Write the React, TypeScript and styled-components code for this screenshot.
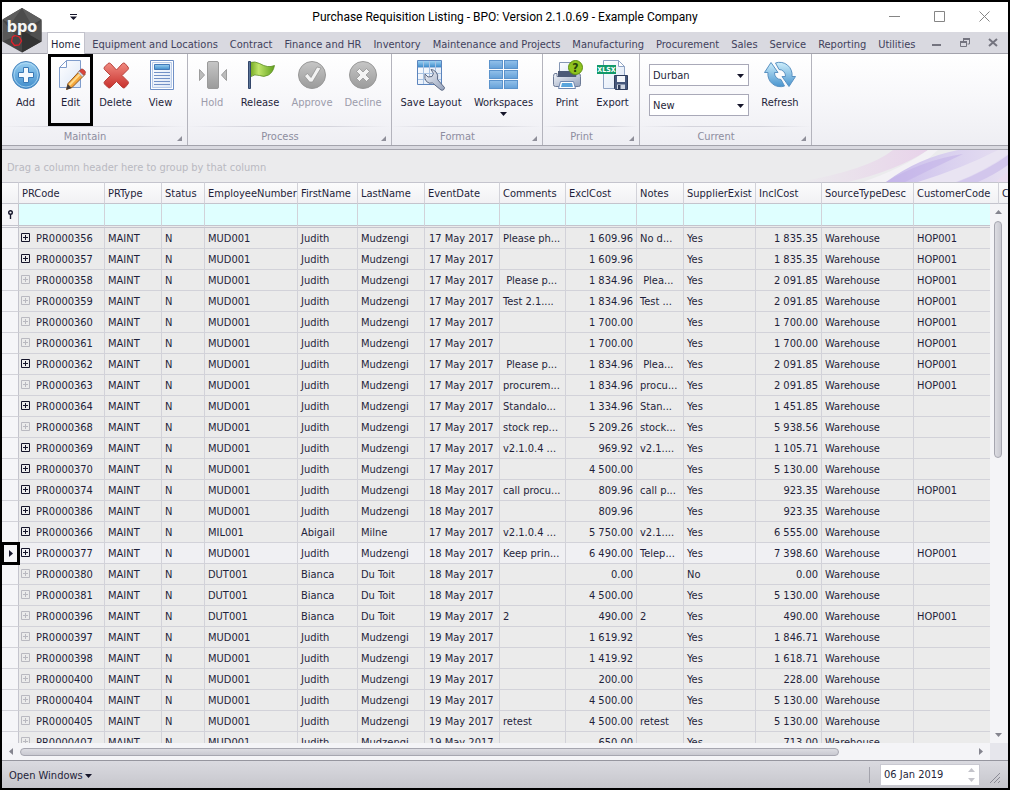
import React from "react";
import styled, { createGlobalStyle, css } from "styled-components";

const ink = "#1f1f3a";
const line = "#d2d2d9";
const edge = "#a3a3ac";

const GlobalStyle = createGlobalStyle`
  *, *::before, *::after { box-sizing: border-box; }
  body { margin: 0; background: #000; }
  body, button, input, select {
    font-family: "DejaVu Sans Condensed", "DejaVu Sans", Tahoma, sans-serif;
    font-stretch: condensed;
    font-size: 11px;
    line-height: 14px;
    color: ${ink};
  }
  button, input, select { margin: 0; padding: 0; border: 0; background: none; border-radius: 0; outline: none; }
  svg { display: block; flex: none; }
`;

const Window = styled.div`
  position: relative;
  display: flex;
  flex-direction: column;
  height: 100vh;
  min-height: 400px;
  border: 2px solid #000;
  background: #d9d9e0;
  overflow: hidden;
`;

/* ---------- title bar ---------- */

const TitleBar = styled.header`
  display: grid;
  grid-template-columns: 1fr auto 1fr;
  align-items: center;
  height: 30px;
  flex: none;
  background: #fff;
`;

const Title = styled.h1`
  margin: 0;
  font: 400 12px/16px Roboto, "Open Sans", sans-serif;
  color: #000;
  white-space: nowrap;
`;

const QuickAccess = styled.button`
  width: 16px;
  height: 16px;
  margin-left: 63px;
  display: grid;
  place-items: center;
`;

const WindowButtons = styled.div`
  display: flex;
  justify-content: flex-end;
  gap: 29px;
  padding: 0 16px 2px 0;
`;

const WindowButton = styled.button`
  width: 16px;
  height: 16px;
  display: grid;
  place-items: center;
`;

const Logo = styled.div`
  position: absolute;
  left: 0;
  top: 6px;
`;

/* ---------- tabs ---------- */

const TabBar = styled.nav`
  display: flex;
  height: 22px;
  flex: none;
  padding-left: 45px;
  border-bottom: 1px solid ${edge};
`;

const Tab = styled.button<{ $active?: boolean }>`
  height: 21px;
  padding: 4px 6px 0;
  color: #41415c;
  white-space: nowrap;
  ${(p) =>
    p.$active &&
    css`
      height: 22px;
      margin-right: 1px;
      padding: 3px 4px 0 3px;
      color: ${ink};
      background: #fff;
      border: 1px solid #c2c2cb;
      border-bottom: 0;
    `}
`;

const MdiButtons = styled.div`
  display: flex;
  align-items: center;
  gap: 16px;
  margin-left: auto;
  padding-right: 9px;
`;

const MdiButton = styled.button`
  width: 12px;
  height: 12px;
`;

/* ---------- ribbon ---------- */

const Ribbon = styled.section`
  display: flex;
  height: 92px;
  flex: none;
  background: linear-gradient(#ffffff, #f7f7fa 50%, #eeeef3);
  border-bottom: 1px solid ${edge};
`;

const Group = styled.div`
  display: flex;
  flex-direction: column;
  border-right: 1px solid #b4b4bd;
`;

const GroupBody = styled.div`
  display: flex;
  height: 72px;
  padding: 0 4px 0 1px;
`;

const Caption = styled.div`
  position: relative;
  height: 19px;
  margin-right: 1px;
  padding: 3px 18px 0 0;
  text-align: center;
  color: #8d8d9f;
  border-top: 1px solid transparent;
  border-image: linear-gradient(90deg, transparent, #d4d4dc 30%, #d4d4dc 70%, transparent) 1;
`;

const Launcher = styled.svg`
  position: absolute;
  right: 4px;
  bottom: 4px;
`;

const Tool = styled.button<{ $width: number; $framed?: boolean }>`
  display: flex;
  flex-direction: column;
  align-items: center;
  width: ${(p) => p.$width}px;
  padding-top: 5px;
  white-space: nowrap;
  outline: ${(p) => (p.$framed ? "3px solid #000" : "none")};
  outline-offset: -3px;

  svg + span { margin-top: 5px; }
  &:disabled { color: #9c9cab; }
`;

const Pickers = styled.div`
  display: flex;
  flex-direction: column;
  gap: 8px;
  padding: 10px 4px 0 8px;
`;

const Picker = styled.label`
  display: grid;
  align-items: center;
  width: 100px;

  select, svg { grid-area: 1 / 1; }
  svg { justify-self: end; margin-right: 5px; pointer-events: none; }
`;

const Select = styled.select`
  appearance: none;
  width: 100%;
  height: 22px;
  padding: 1px 20px 0 3px;
  background: #fff;
  border: 1px solid #a9a9b8;
`;

/* ---------- grid ---------- */

const GroupPanel = styled.div`
  display: flex;
  justify-content: space-between;
  height: 33px;
  flex: none;
  margin-top: 3px;
  padding-left: 5px;
  overflow: hidden;
  border-top: 1px solid ${edge};
  background: #ebebed;
  color: #b9b9c1;
`;

const Hint = styled.span`
  padding-top: 11px;
`;

const GridArea = styled.main`
  position: relative;
  flex: 1;
  min-height: 0;
  overflow: hidden;
  background: #ebebeb;
`;

const Table = styled.table`
  width: 1100px;
  min-width: 100%;
  table-layout: fixed;
  border-collapse: separate;
  border-spacing: 0;
`;

const Head = styled.th`
  height: 22px;
  padding: 1px 3px 0;
  text-align: left;
  font-weight: 400;
  white-space: nowrap;
  background: linear-gradient(#fbfbfc, #f1f1f4);
  border: solid ${line};
  border-width: 1px 1px 1px 0;
  border-color: #c4c4cd ${line};
`;

const FilterCell = styled.td`
  height: 24px;
  padding: 0;
  background: #dfffff;
  background-clip: padding-box;
  border-right: 1px solid ${line};
  border-bottom: 3px double #c4c4cd;

  input { display: block; width: 100%; height: 20px; padding: 0 3px; }
`;

const Marker = styled.td<{ $framed?: boolean }>`
  height: 21px;
  padding: 0;
  background: #f5f5f8;
  border-right: 1px solid #c4c4cd;
  border-bottom: 1px solid ${line};
  outline: ${(p) => (p.$framed ? "3px solid #000" : "none")};
  outline-offset: -2px;

  svg { margin: 0 auto; }
`;

const FilterMarker = styled(Marker)`
  height: 24px;
  border-bottom: 3px double #c4c4cd;
`;

const Row = styled.tr<{ $focused?: boolean }>`
  background: ${(p) => (p.$focused ? "#f0f0f3" : "#ebebeb")};
`;

const Cell = styled.td<{ $align?: "right"; $date?: boolean }>`
  height: 21px;
  padding: 2px 3px 0 ${(p) => (p.$date ? 4 : 3)}px;
  text-align: ${(p) => p.$align ?? "left"};
  white-space: nowrap;
  overflow: hidden;
  border-right: 1px solid ${line};
  border-bottom: 1px solid ${line};
`;

const CodeCell = styled.div`
  display: flex;
  align-items: center;
  gap: 6px;
  margin-left: -1px;
`;

const Expander = styled.button<{ $dim: boolean }>`
  width: 9px;
  height: 9px;
  margin-bottom: 3px;
  color: ${(p) => (p.$dim ? "#b9b9c0" : "#15152a")};
`;

/* ---------- scroll bars ---------- */

const VScroll = styled.div`
  position: absolute;
  top: 22px;
  right: 0;
  bottom: 0;
  width: 18px;
  display: flex;
  flex-direction: column;
  align-items: center;
  background: #f4f4f7;
  padding: 5px 2px 5px 0;
  gap: 5px;
`;

const HScroll = styled.div`
  display: flex;
  align-items: center;
  gap: 5px;
  height: 17px;
  flex: none;
  padding: 0 24px 0 6px;
  background: linear-gradient(90deg, #f4f4f7, #f4f4f7) 0 0 / calc(100% - 18px) 100% no-repeat #e6e6ec;
`;

const Track = styled.div`
  flex: 1;
  min-height: 0;
`;

const Thumb = styled.div<{ $vertical?: boolean }>`
  border: 1px solid #a6a6b0;
  border-radius: 4px;
  ${(p) =>
    p.$vertical
      ? css`
          width: 8px;
          height: 47%;
          background: linear-gradient(90deg, #dcdce2, #c9c9d1);
        `
      : css`
          width: 86%;
          height: 8px;
          background: linear-gradient(#dcdce2, #c9c9d1);
        `}
`;

/* ---------- status bar ---------- */

const StatusBar = styled.footer`
  display: flex;
  align-items: center;
  height: 28px;
  flex: none;
  padding: 0 3px 0 7px;
  border-top: 1px solid #96969f;
  background: linear-gradient(#dadae0, #c6c6cc);
`;

const OpenWindows = styled.button`
  display: flex;
  align-items: center;
  gap: 2px;
  margin-right: auto;
  padding-top: 2px;
`;

const Divider = styled.div`
  width: 1px;
  height: 16px;
  margin-right: 10px;
  background: #a3a3ac;
`;

const DateBox = styled.label`
  display: flex;
  align-items: center;
  width: 100px;
  height: 22px;
  margin-right: 5px;
  padding: 0 4px 0 3px;
  background: #fff;
  border: 1px solid #c9c9d1;

  input { flex: 1; width: 0; padding-top: 1px; }
`;

/* ---------- small drawings ---------- */

type ArrowDir = "down" | "up" | "left" | "right";
const arrowShape: Record<ArrowDir, string> = {
  down: "M0 2h7L3.500 6z",
  up: "M0 5h7L3.500 1z",
  left: "M5 0v7L1 3.500z",
  right: "M2 0v7l4-3.500z",
};
const Arrow = ({ dir = "down", color = "#15152a" }: { dir?: ArrowDir; color?: string }) => (
  <svg width="7" height="7" viewBox="0 0 7 7" fill={color}>
    <path d={arrowShape[dir]} />
  </svg>
);

const Gradients = () => (
  <svg width="0" height="0" style={{ position: "absolute" }} aria-hidden="true">
    <defs>
      <linearGradient id="blue" x1="0" y1="0" x2="0" y2="1">
        <stop offset="0" stopColor="#9ad0f2" />
        <stop offset="1" stopColor="#3f8ccb" />
      </linearGradient>
      <linearGradient id="tile" x1="0" y1="0" x2="0" y2="1">
        <stop offset="0" stopColor="#93c1ea" />
        <stop offset="1" stopColor="#64a0d8" />
      </linearGradient>
      <linearGradient id="pale" x1="0" y1="0" x2="0" y2="1">
        <stop offset="0" stopColor="#cdeefb" />
        <stop offset="1" stopColor="#4a95cf" />
      </linearGradient>
      <linearGradient id="paper" x1="0" y1="0" x2="1" y2="1">
        <stop offset="0" stopColor="#ffffff" />
        <stop offset="1" stopColor="#dbe6f6" />
      </linearGradient>
      <linearGradient id="red" x1="0" y1="0" x2="0" y2="1">
        <stop offset="0" stopColor="#f08a80" />
        <stop offset="1" stopColor="#c8302c" />
      </linearGradient>
      <linearGradient id="grey" x1="0" y1="0" x2="0" y2="1">
        <stop offset="0" stopColor="#c6c6c6" />
        <stop offset="1" stopColor="#9b9b9b" />
      </linearGradient>
      <linearGradient id="green" x1="0" y1="0" x2="1" y2="0">
        <stop offset="0" stopColor="#6fa51e" />
        <stop offset="0.350" stopColor="#c0e56a" />
        <stop offset="1" stopColor="#5f9f1c" />
      </linearGradient>
      <linearGradient id="steel" x1="0" y1="0" x2="1" y2="1">
        <stop offset="0" stopColor="#f2f5fa" />
        <stop offset="1" stopColor="#93a0ba" />
      </linearGradient>
    </defs>
  </svg>
);

const icons = {
  add: (
    <>
      <circle cx="16" cy="16" r="13.500" fill="url(#blue)" stroke="#4a86bd" />
      <circle cx="16" cy="16" r="12" fill="none" stroke="#b9def5" strokeOpacity=".7" />
      <path d="M13.500 8.500h5v5h5v5h-5v5h-5v-5h-5v-5h5z" fill="#f4fafe" stroke="#3a79b5" />
    </>
  ),
  edit: (
    <>
      <path d="M11.500 1.500h14v27h-21v-20z" fill="url(#paper)" stroke="#7f9ccb" />
      <path d="M11.500 1.500v7h-7z" fill="#fff" stroke="#7f9ccb" />
      <path d="M11.500 30.500l1.500-6L25.500 11l4.500 4.500-13 13z" fill="#f5a63a" stroke="#8f5a26" />
      <path d="M14.500 26L27 13" stroke="#ffdb8c" strokeWidth="2" />
      <path d="M24 12.500l2-2.200c1.500-1.300 5.500 2.200 4.300 4l-2.300 2.500z" fill="#d8463c" stroke="#9d3a34" strokeWidth=".7" />
      <path d="M23 13.500l1.300-1.300 4.400 4.400-1.300 1.300z" fill="#d9dee8" stroke="#7b8191" strokeWidth=".5" />
      <path d="M11.300 30.700l1.500-5.500 3.700 3.700z" fill="#3d3a3c" />
    </>
  ),
  delete: (
    <path
      d="M4.500 8l3.500-3.500q1.200-1 2.500 0L16.500 11l6-6.500q1.200-1 2.500 0L28 8q1 1.200 0 2.500L22 16.500l6 6q1 1.200 0 2.500l-3 3.500q-1.200 1-2.500 0l-6-6-6 6q-1.200 1-2.500 0L4.500 25q-1-1.200 0-2.500l6-6-6-6q-1-1.200 0-2.500z"
      fill="url(#red)"
      stroke="#b8423c"
    />
  ),
  view: (
    <>
      <path d="M5.500 1.500h23v29h-23z" fill="#fff" stroke="#6f90c6" />
      <path d="M7.500 3.500h19v25h-19z" fill="url(#paper)" stroke="#b9cbe8" />
      <path d="M9.500 5.500h15v5h-15z" fill="url(#blue)" stroke="#4379b8" />
      <path d="M9 13.500h16M9 16.500h16M9 19.500h16M9 22.500h16M9 25.500h16" stroke="#7391c6" />
    </>
  ),
  hold: (
    <>
      <rect x="11.500" y="2.500" width="11" height="27" rx="1.500" fill="url(#grey)" stroke="#9a9a9a" />
      <path d="M3.500 10.500v11l5-5.500zM30.500 10.500v11l-5-5.500z" fill="#bcbcbc" stroke="#9c9c9c" />
    </>
  ),
  release: (
    <>
      <path d="M6 3.500q5-1.500 9.500 1t8 3 7-1q-1.500 7-6 9.500t-9 .500-9.500 1.500z" fill="url(#green)" stroke="#5b8b1f" strokeWidth=".8" />
      <path d="M4.500 2.500h2v27h-2z" fill="#5b7599" stroke="#33466a" />
    </>
  ),
  approve: (
    <>
      <circle cx="16" cy="16" r="13.500" fill="url(#grey)" stroke="#989898" />
      <path d="M8.500 17l3-2.500 3.500 4L21 8l4 1-8.500 14h-3z" fill="#f3f3f3" stroke="#8d8d8d" strokeWidth=".7" />
    </>
  ),
  decline: (
    <>
      <circle cx="16" cy="16" r="13.500" fill="url(#grey)" stroke="#989898" />
      <path d="M9.500 12.500l3-3L16 13l3.500-3.500 3 3L19 16l3.500 3.500-3 3L16 19l-3.500 3.500-3-3L13 16z" fill="#f3f3f3" stroke="#8d8d8d" strokeWidth=".7" />
    </>
  ),
  layout: (
    <>
      <path d="M2.500 1.500h24v24h-24z" fill="url(#paper)" stroke="#5b84bd" />
      <path d="M3 2h23v6H3z" fill="url(#blue)" />
      <path d="M8.500 2v23M14.500 2v23M20.500 2v23M3 8.500h23M3 14.500h23M3 20.500h23" stroke="#a8c2e2" />
      <path
        d="M16 10.500l2.500 4-1.500 3-4 .5-3-3q-1 5 1.500 7.500t6 1.500l8.500 7q3 1 3.500-2.500l-7-8q1-5-1.500-7.500t-5-2.500z"
        fill="url(#steel)"
        stroke="#5c6984"
      />
    </>
  ),
  workspaces: (
    <>
      {[1.5, 11.5, 21.5].map((y) =>
        [1.5, 16.5].map((x) => (
          <rect key={`${x}-${y}`} x={x} y={y} width="13" height="8" fill="url(#tile)" stroke="#5b93cc" />
        )),
      )}
    </>
  ),
  print: (
    <>
      <path d="M8.500 3.500h14v11h-14z" fill="url(#paper)" stroke="#8597b5" />
      <path d="M4 14.500q-1.500 0-1.500 3v8q0 2 2 2h23q2 0 2-2v-8q0-3-1.500-3h-3v3H6v-3z" fill="url(#steel)" stroke="#6c7a96" />
      <path d="M7 12h18v6H7z" fill="#4d5b78" />
      <path d="M9.500 22.500h13l2 7h-17z" fill="#fff" stroke="#7088b0" />
      <path d="M11 24h10l1 4H10z" fill="#5aa5dc" />
      <circle cx="24.500" cy="8.500" r="7" fill="#8fc31f" stroke="#5e8f12" />
      <text x="24.500" y="13" textAnchor="middle" fontSize="12" fontWeight="700" fill="#25400a">?</text>
    </>
  ),
  export: (
    <>
      <path d="M6.500 1.500h15l6 6v22h-21z" fill="url(#paper)" stroke="#8fa3c4" />
      <path d="M21.500 1.500v6h6z" fill="#fff" stroke="#8fa3c4" />
      <path d="M0 6h19v9H0z" fill="#129a6a" />
      <text x="9.500" y="13" textAnchor="middle" fontSize="7" fontWeight="700" fill="#fff">XLSX</text>
      <path d="M17.500 16.500h13v14h-12l-1-1z" fill="#46587c" stroke="#2f3d5c" />
      <path d="M20 17h8v6h-8z" fill="#f4f6fa" />
      <path d="M20 25.500h8V30h-8z" fill="#cfd6e2" />
      <path d="M21 26h2.500v4H21z" fill="#2f3d5c" />
    </>
  ),
  refresh: (
    <>
      <path d="M.5 13.500L7 3.500l7 10h-3.500A6.500 6.500 0 0 0 17 20.500l3.500 6.500A12.500 12.500 0 0 1 4 13.500z" fill="url(#pale)" stroke="#5b92c2" />
      <path d="M31.500 17.500L25 27.500l-7-10h3.500A6.500 6.500 0 0 0 15 10.500L11.500 4A12.500 12.500 0 0 1 28 17.500z" fill="url(#pale)" stroke="#5b92c2" />
    </>
  ),
};

const Icon = ({ name }: { name: keyof typeof icons }) => (
  <svg width="32" height="32" viewBox="0 0 32 32" aria-hidden="true">
    {icons[name]}
  </svg>
);

const LogoMark = () => (
  <svg width="41" height="46" viewBox="0 0 41 46" role="img" aria-label="bpo">
    <path d="M20 0l19.500 11.500v22L20 44.500.5 33.500v-22z" fill="#454545" />
    <path d="M20 0l19.500 11.500L20 22 .5 11.500z" fill="#5d5d5d" />
    <path d="M20 0l9 16-9 6-10-8z" fill="#4c4c4c" />
    <path d="M20 22l19.500 11.500L20 44.500z" fill="#333" />
    <path d="M.5 12l13 16L.5 33.500z" fill="#585858" />
    <path d="M39.500 12L28 27l11.500 6.500z" fill="#4f4f4f" />
    <text x="20" y="24" textAnchor="middle" fontFamily="DejaVu Sans" fontSize="16" fontWeight="700" fill="#f4f4f4">bpo</text>
    <path d="M13 27.500l4.500 1.500 2 4-2.500 4-4.500.5-3-4 1-4.500z" fill="none" stroke="#e0202a" strokeWidth="1.300" />
  </svg>
);

const Swoosh = () => (
  <svg width="250" height="32" viewBox="0 0 250 32" aria-hidden="true">
    <defs>
      <linearGradient id="pink" x1="0" y1="0" x2="1" y2="0">
        <stop offset="0" stopColor="#ebebed" />
        <stop offset="1" stopColor="#e8d3ea" />
      </linearGradient>
      <linearGradient id="violet" x1="0" y1="0" x2="1" y2="0">
        <stop offset="0" stopColor="#cabdec" />
        <stop offset="0.500" stopColor="#d9d0ef" />
        <stop offset="1" stopColor="#e6dff1" />
      </linearGradient>
    </defs>
    <path d="M40 32Q110 20 135 0h35Q140 20 90 32z" fill="url(#pink)" />
    <path d="M105 32Q145 18 170 0h10q-20 20-50 32z" fill="#f3f1f5" />
    <path d="M128 32Q160 8 200 0h50v32z" fill="url(#violet)" />
    <path d="M128 32Q165 10 205 4q-30 14-58 28z" fill="#bfaee8" opacity=".5" />
    <path d="M160 32Q205 18 240 0h10v4q-25 18-52 28z" fill="#e9e4f2" />
    <path d="M200 32q30-12 50-27v10q-14 10-30 17z" fill="#d2c6ec" />
    <path d="M238 32q6-6 12-10v10z" fill="#e9dcef" />
  </svg>
);

/* ---------- data ---------- */

const tabs = [
  "Home", "Equipment and Locations", "Contract", "Finance and HR", "Inventory",
  "Maintenance and Projects", "Manufacturing", "Procurement", "Sales", "Service",
  "Reporting", "Utilities",
];

const columns: { name: string; width?: number }[] = [
  { name: "PRCode", width: 86 },
  { name: "PRType", width: 57 },
  { name: "Status", width: 43 },
  { name: "EmployeeNumber", width: 93 },
  { name: "FirstName", width: 60 },
  { name: "LastName", width: 67 },
  { name: "EventDate", width: 75 },
  { name: "Comments", width: 66 },
  { name: "ExclCost", width: 71 },
  { name: "Notes", width: 47 },
  { name: "SupplierExist", width: 72 },
  { name: "InclCost", width: 66 },
  { name: "SourceTypeDesc", width: 92 },
  { name: "CustomerCode", width: 85 },
  { name: "C" },
];

const people: Record<string, [string, string]> = {
  MUD001: ["Judith", "Mudzengi"],
  MIL001: ["Abigail", "Milne"],
  DUT001: ["Bianca", "Du Toit"],
};

/* code, has details, employee, day of May 2017, comments, excl, notes, supplier, incl, customer */
type Req = [string, boolean, string, number, string, string, string, string, string, string];
const rows: Req[] = [
  ["356", true, "MUD001", 17, "Please ph...", "1 609.96", "No d...", "Yes", "1 835.35", "HOP001"],
  ["357", true, "MUD001", 17, "", "1 609.96", "", "Yes", "1 835.35", "HOP001"],
  ["358", false, "MUD001", 17, "\u00a0Please p...", "1 834.96", "\u00a0Plea...", "Yes", "2 091.85", "HOP001"],
  ["359", false, "MUD001", 17, "Test 2.1....", "1 834.96", "Test ...", "Yes", "2 091.85", "HOP001"],
  ["360", false, "MUD001", 17, "", "1 700.00", "", "Yes", "1 700.00", "HOP001"],
  ["361", false, "MUD001", 17, "", "1 700.00", "", "Yes", "1 700.00", "HOP001"],
  ["362", true, "MUD001", 17, "\u00a0Please p...", "1 834.96", "\u00a0Plea...", "Yes", "2 091.85", "HOP001"],
  ["363", false, "MUD001", 17, "procurem...", "1 834.96", "procu...", "Yes", "2 091.85", "HOP001"],
  ["364", true, "MUD001", 17, "Standalo...", "1 334.96", "Stan...", "Yes", "1 451.85", ""],
  ["368", false, "MUD001", 17, "stock rep...", "5 209.26", "stock...", "Yes", "5 938.56", ""],
  ["369", true, "MUD001", 17, "v2.1.0.4 ...", "969.92", "v2.1....", "Yes", "1 105.71", ""],
  ["370", true, "MUD001", 17, "", "4 500.00", "", "Yes", "5 130.00", ""],
  ["374", true, "MUD001", 18, "call procu...", "809.96", "call p...", "Yes", "923.35", "HOP001"],
  ["386", true, "MUD001", 18, "", "809.96", "", "Yes", "923.35", ""],
  ["366", true, "MIL001", 17, "v2.1.0.4 ...", "5 750.00", "v2.1....", "Yes", "6 555.00", ""],
  ["377", true, "MUD001", 18, "Keep prin...", "6 490.00", "Telep...", "Yes", "7 398.60", "HOP001"],
  ["380", false, "DUT001", 18, "", "0.00", "", "No", "0.00", ""],
  ["381", false, "DUT001", 18, "", "4 500.00", "", "Yes", "5 130.00", ""],
  ["396", false, "DUT001", 19, "2", "490.00", "2", "Yes", "490.00", "HOP001"],
  ["397", false, "MUD001", 19, "", "1 619.92", "", "Yes", "1 846.71", ""],
  ["398", false, "MUD001", 19, "", "1 419.92", "", "Yes", "1 618.71", ""],
  ["400", false, "MUD001", 19, "", "200.00", "", "Yes", "228.00", ""],
  ["404", false, "MUD001", 19, "", "4 500.00", "", "Yes", "5 130.00", ""],
  ["405", false, "MUD001", 19, "retest", "4 500.00", "retest", "Yes", "5 130.00", ""],
  ["407", false, "MUD001", 19, "", "650.00", "", "Yes", "713.00", ""],
];
const focusedCode = "377";

/* ---------- composed parts ---------- */

interface ToolProps {
  icon: keyof typeof icons;
  label: string;
  width: number;
  framed?: boolean;
  disabled?: boolean;
  menu?: boolean;
}
const ToolButton = ({ icon, label, width, framed, disabled, menu }: ToolProps) => (
  <Tool type="button" $width={width} $framed={framed} disabled={disabled}>
    <Icon name={icon} />
    <span>{label}</span>
    {menu && <Arrow />}
  </Tool>
);

const RibbonGroup = ({ caption, children }: { caption: string; children: React.ReactNode }) => (
  <Group>
    <GroupBody>{children}</GroupBody>
    <Caption>
      {caption}
      <Launcher width="5" height="5" viewBox="0 0 5 5">
        <path d="M5 0v5H0z" fill="#8f8f9a" />
      </Launcher>
    </Caption>
  </Group>
);

const PickerBox = ({ label, value }: { label: string; value: string }) => (
  <Picker>
    <Select aria-label={label} defaultValue={value}>
      <option>{value}</option>
    </Select>
    <Arrow />
  </Picker>
);

const RequisitionRow = ({ req }: { req: Req }) => {
  const [code, details, employee, day, comments, excl, notes, supplier, incl, customer] = req;
  const [first, last] = people[employee];
  const focused = code === focusedCode;
  return (
    <Row $focused={focused}>
      <Marker $framed={focused}>{focused && <Arrow dir="right" />}</Marker>
      <Cell>
        <CodeCell>
          <Expander type="button" aria-label="Expand row" $dim={!details}>
            <svg width="9" height="9" viewBox="0 0 9 9" fill="none" stroke="currentColor">
              <path d="M.5.5h8v8h-8zM2 4.500h5M4.500 2v5" />
            </svg>
          </Expander>
          PR0000{code}
        </CodeCell>
      </Cell>
      <Cell>MAINT</Cell>
      <Cell>N</Cell>
      <Cell>{employee}</Cell>
      <Cell>{first}</Cell>
      <Cell>{last}</Cell>
      <Cell $date>{day} May 2017</Cell>
      <Cell>{comments}</Cell>
      <Cell $align="right">{excl}</Cell>
      <Cell>{notes}</Cell>
      <Cell>{supplier}</Cell>
      <Cell $align="right">{incl}</Cell>
      <Cell>Warehouse</Cell>
      <Cell>{customer}</Cell>
      <Cell />
    </Row>
  );
};

export default function App() {
  return (
    <>
      <GlobalStyle />
      <Gradients />
      <Window>
        <TitleBar>
          <QuickAccess type="button" aria-label="Customize quick access toolbar">
            <svg width="7" height="7" viewBox="0 0 7 7" fill="#15152a">
              <path d="M0 0h7v1H0zM0 2.500h7L3.500 6z" />
            </svg>
          </QuickAccess>
          <Title>Purchase Requisition Listing - BPO: Version 2.1.0.69 - Example Company</Title>
          <WindowButtons>
            <WindowButton type="button" aria-label="Minimize">
              <svg width="11" height="11" stroke="#858585"><path d="M0 5.500h11" /></svg>
            </WindowButton>
            <WindowButton type="button" aria-label="Maximize">
              <svg width="11" height="11" fill="none" stroke="#858585"><path d="M.5.5h10v10H.5z" /></svg>
            </WindowButton>
            <WindowButton type="button" aria-label="Close">
              <svg width="11" height="11" stroke="#858585"><path d="M.5.5l10 10M10.500.5l-10 10" /></svg>
            </WindowButton>
          </WindowButtons>
        </TitleBar>

        <TabBar>
          {tabs.map((tab, i) => (
            <Tab key={tab} type="button" $active={i === 0}>{tab}</Tab>
          ))}
          <MdiButtons>
            <MdiButton type="button" aria-label="Minimize document">
              <svg width="12" height="12" fill="#74747f"><path d="M1 7h9v2H1z" /></svg>
            </MdiButton>
            <MdiButton type="button" aria-label="Restore document">
              <svg width="12" height="12" fill="none" stroke="#74747f">
                <path d="M4 1.500h7M4 2.500h7M4.500 2v2M10.500 2v5h-2M1 4.500h7M1 5.500h7M1.500 5v4.500h6V5" />
              </svg>
            </MdiButton>
            <MdiButton type="button" aria-label="Close document">
              <svg width="12" height="12" stroke="#74747f" strokeWidth="2"><path d="M2 2l8 7M10 2L2 9" /></svg>
            </MdiButton>
          </MdiButtons>
        </TabBar>

        <Ribbon>
          <RibbonGroup caption="Maintain">
            <ToolButton icon="add" label="Add" width={45} />
            <ToolButton icon="edit" label="Edit" width={45} framed />
            <ToolButton icon="delete" label="Delete" width={45} />
            <ToolButton icon="view" label="View" width={45} />
          </RibbonGroup>
          <RibbonGroup caption="Process">
            <ToolButton icon="hold" label="Hold" width={46} disabled />
            <ToolButton icon="release" label="Release" width={50} />
            <ToolButton icon="approve" label="Approve" width={54} disabled />
            <ToolButton icon="decline" label="Decline" width={48} disabled />
          </RibbonGroup>
          <RibbonGroup caption="Format">
            <ToolButton icon="layout" label="Save Layout" width={76} />
            <ToolButton icon="workspaces" label="Workspaces" width={69} menu />
          </RibbonGroup>
          <RibbonGroup caption="Print">
            <ToolButton icon="print" label="Print" width={46} />
            <ToolButton icon="export" label="Export" width={45} />
          </RibbonGroup>
          <RibbonGroup caption="Current">
            <Pickers>
              <PickerBox label="Site" value="Durban" />
              <PickerBox label="Status" value="New" />
            </Pickers>
            <ToolButton icon="refresh" label="Refresh" width={54} />
          </RibbonGroup>
        </Ribbon>

        <GroupPanel>
          <Hint>Drag a column header here to group by that column</Hint>
          <Swoosh />
        </GroupPanel>

        <GridArea>
          <Table>
            <colgroup>
              <col width={17} />
              {columns.map((c) => <col key={c.name} width={c.width} />)}
            </colgroup>
            <thead>
              <tr>
                <Head aria-label="Row marker" />
                {columns.map((c) => <Head key={c.name} scope="col">{c.name}</Head>)}
              </tr>
            </thead>
            <tbody>
              <tr>
                <FilterMarker>
                  <svg width="7" height="9" viewBox="0 0 7 9" fill="none" stroke="#15152a">
                    <circle cx="3.500" cy="2.500" r="1.800" strokeWidth="1.400" />
                    <path d="M3.500 4v5" strokeWidth="1.400" />
                  </svg>
                </FilterMarker>
                {columns.map((c) => (
                  <FilterCell key={c.name}><input type="text" aria-label={`Filter ${c.name}`} /></FilterCell>
                ))}
              </tr>
              {rows.map((req) => <RequisitionRow key={req[0]} req={req} />)}
            </tbody>
          </Table>
          <VScroll>
            <Arrow dir="up" color="#85858f" />
            <Track><Thumb $vertical /></Track>
            <Arrow dir="down" color="#85858f" />
          </VScroll>
        </GridArea>

        <HScroll>
          <Arrow dir="left" color="#85858f" />
          <Track><Thumb /></Track>
          <Arrow dir="right" color="#85858f" />
        </HScroll>

        <StatusBar>
          <OpenWindows type="button">Open Windows <Arrow /></OpenWindows>
          <Divider />
          <DateBox>
            <input type="text" aria-label="Date" defaultValue="06 Jan 2019" />
            <svg width="7" height="14" viewBox="0 0 7 14" fill="#c3c3ca">
              <path d="M0 4h7L3.500 0zM0 10h7l-3.500 4z" />
            </svg>
          </DateBox>
          <svg width="20" height="22" viewBox="0 0 20 22" stroke="#8b8b95">
            <path d="M5 19L15 9M9 19l6-6M13 19l2-2" />
          </svg>
        </StatusBar>

        <Logo><LogoMark /></Logo>
      </Window>
    </>
  );
}
